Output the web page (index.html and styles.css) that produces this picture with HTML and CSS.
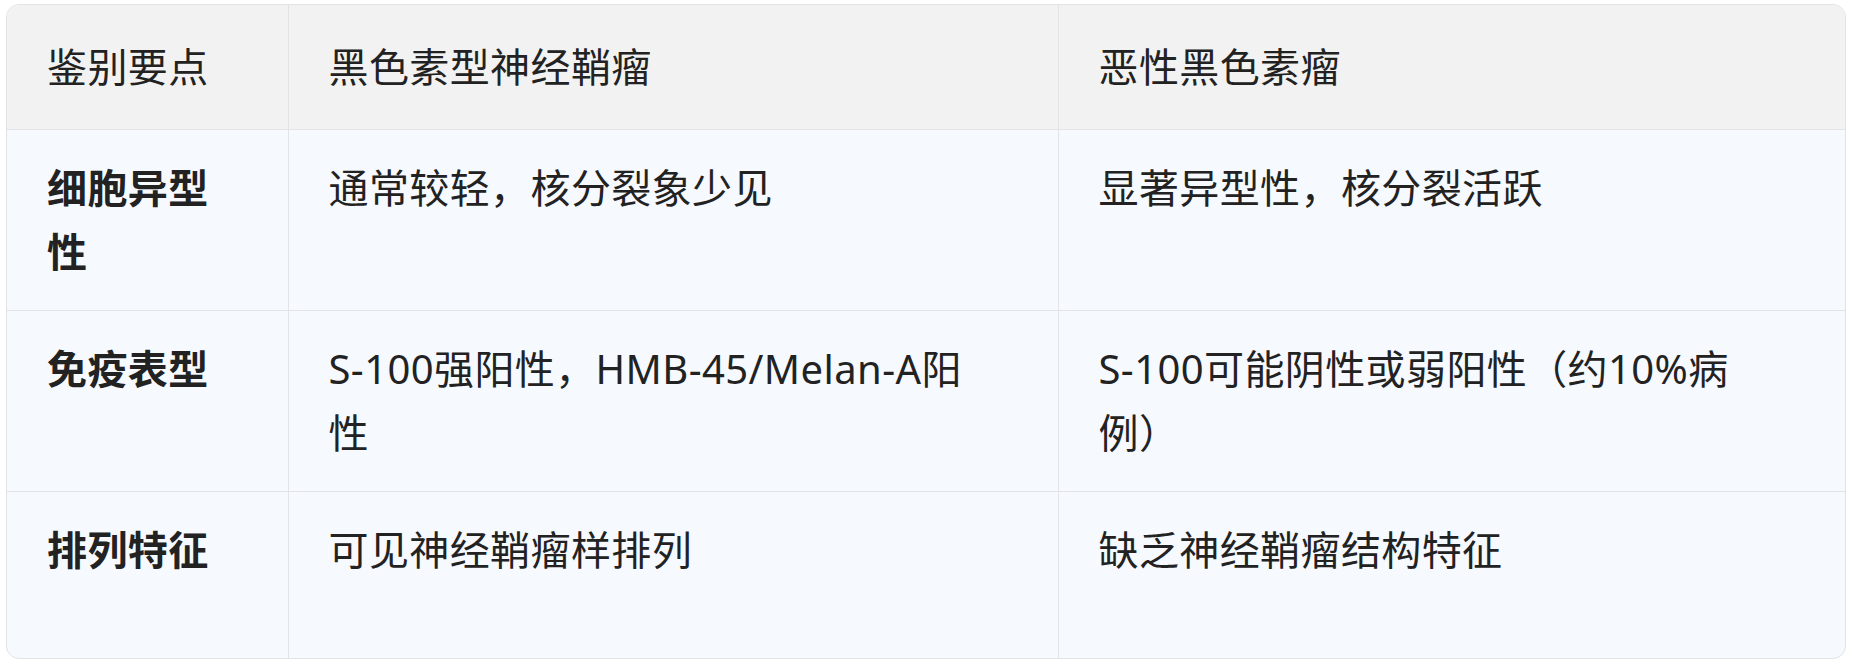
FILE: index.html
```html
<!DOCTYPE html>
<html lang="zh-CN">
<head>
<meta charset="utf-8">
<title>鉴别要点</title>
<link rel="stylesheet" href="styles.css">
</head>
<body>
<div class="table-wrap">
  <table class="cmp">
    <colgroup>
      <col class="c1">
      <col class="c2">
      <col class="c3">
    </colgroup>
    <thead>
      <tr>
        <th class="k">鉴别要点</th>
        <th class="a">黑色素型神经鞘瘤</th>
        <th class="b">恶性黑色素瘤</th>
      </tr>
    </thead>
    <tbody>
      <tr>
        <td class="k key">细胞异型性</td>
        <td class="a">通常较轻，核分裂象少见</td>
        <td class="b">显著异型性，核分裂活跃</td>
      </tr>
      <tr>
        <td class="k key">免疫表型</td>
        <td class="a">S-100强阳性，HMB-45/Melan-A阳性</td>
        <td class="b">S-100可能阴性或弱阳性（约10%病例）</td>
      </tr>
      <tr class="last">
        <td class="k key">排列特征</td>
        <td class="a">可见神经鞘瘤样排列</td>
        <td class="b">缺乏神经鞘瘤结构特征</td>
      </tr>
    </tbody>
  </table>
</div>
</body>
</html>
```
FILE: styles.css
```css
html, body {
  margin: 0;
  padding: 0;
  background: #ffffff;
}
body {
  padding: 4px 7px 0 6px;
  font-family: "Noto Sans", "Noto Sans CJK SC", sans-serif;
  color: #222222;
}
.table-wrap {
  border: 1px solid #e1e3e6;
  border-radius: 13px;
  overflow: hidden;
  background: #f6f9fe;
}
.cmp {
  width: 100%;
  border-collapse: collapse;
  table-layout: fixed;
  font-size: 40px;
  line-height: 64px;
  letter-spacing: 0.4px;
}
.c1 { width: 281px; }
.c2 { width: 770px; }
.c3 { width: auto; }
.cmp th,
.cmp td {
  text-align: left;
  vertical-align: top;
  padding: 26px 40px;
  border-right: 1px solid #e1e3e6;
  border-bottom: 1px solid #e1e3e6;
}
.cmp .k { padding-right: 60px; }
.cmp .a { padding-right: 89px; }
.cmp .b { padding-right: 107px; }
.cmp th:last-child,
.cmp td:last-child {
  border-right: none;
}
.cmp tr.last td {
  border-bottom: none;
  height: 114px;
}
.cmp th {
  font-weight: 400;
  background: #f2f2f2;
  padding-top: 30px;
  padding-bottom: 30px;
}
.cmp td.key {
  font-weight: 700;
}
```
